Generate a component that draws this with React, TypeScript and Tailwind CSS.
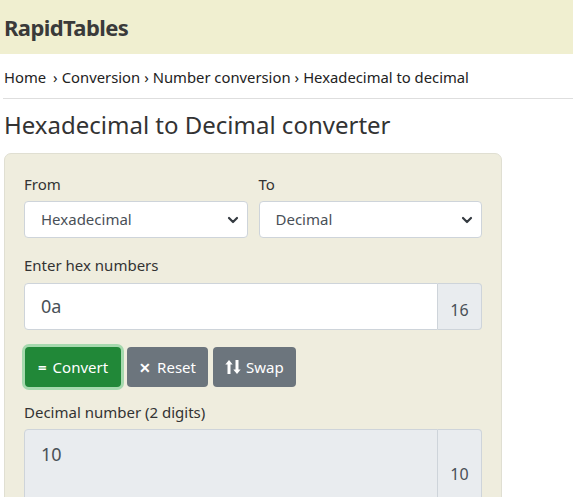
export default function App() {
  return (
    <div className="min-h-screen bg-white text-[#333] overflow-hidden" style={{ fontFamily: '"Noto Sans", "Open Sans", sans-serif' }}>
      {/* Header */}
      <header className="h-[54px] bg-[#f0efd0] flex items-center px-[4px]">
        <span className="text-[22px] font-bold text-[#3a3a3a] tracking-[-0.6px]">RapidTables</span>
      </header>

      {/* Breadcrumb */}
      <nav className="px-[4px] pt-[12px] pb-[10px] text-[14.8px] text-[#222] leading-[22px]">
        <span>Home</span>
        <span className="mx-[4px] ml-[7px]">›</span>
        <span>Conversion</span>
        <span className="mx-[4px]">›</span>
        <span>Number conversion</span>
        <span className="mx-[4px]">›</span>
        <span>Hexadecimal to decimal</span>
      </nav>
      <hr className="ml-[3px] border-0 h-px bg-[#dedede]" />

      <h1 className="px-[4px] mt-[10px] text-[24px] leading-[32px] text-[#333]">Hexadecimal to Decimal converter</h1>

      {/* Panel */}
      <div className="ml-[4px] mt-[12px] w-[498px] bg-[#efedde] border border-[#e0dfd2] rounded-[7px] px-[19px] pt-[20px] pb-[40px]">
        <div className="flex gap-[11px]">
          <div className="flex-1">
            <label className="block text-[15px] leading-[20px] mb-[7px]">From</label>
            <div className="h-[37px] bg-white border border-[#ced4da] rounded-[4px] flex items-center pl-[16px] pr-[8px] text-[15px] text-[#495057]">
              <span className="flex-1">Hexadecimal</span>
              <Chevron />
            </div>
          </div>
          <div className="flex-1">
            <label className="block text-[15px] leading-[20px] mb-[7px]">To</label>
            <div className="h-[37px] bg-white border border-[#ced4da] rounded-[4px] flex items-center pl-[16px] pr-[8px] text-[15px] text-[#495057]">
              <span className="flex-1">Decimal</span>
              <Chevron />
            </div>
          </div>
        </div>

        <label className="block text-[15px] leading-[20px] mt-[17px] mb-[8px]">Enter hex numbers</label>
        <div className="flex h-[47px]">
          <div className="flex-1 bg-white border border-[#ced4da] rounded-l-[4px] flex items-center pl-[16px] text-[18px] text-[#495057]">0a</div>
          <div className="w-[44px] bg-[#e9ecef] border border-l-0 border-[#ced4da] rounded-r-[4px] flex items-end justify-center pb-[7px] text-[16px] text-[#495057]">16</div>
        </div>

        <div className="flex gap-[4px] mt-[17px]">
          <button className="h-[40px] px-[13px] bg-[#218838] text-white text-[15px] rounded-[4px] ring-[3px] ring-[#a6d9ae] ml-[1px] flex items-center">
            <span className="mr-[6px] font-bold">=</span>Convert
          </button>
          <button className="h-[40px] px-[12px] ml-[2px] bg-[#6c757d] text-white text-[15px] rounded-[4px] flex items-center">
            <span className="mr-[6px] text-[14px] font-bold">✕</span>Reset
          </button>
          <button className="h-[40px] px-[12px] ml-[1px] bg-[#6c757d] text-white text-[15px] rounded-[4px] flex items-center">
            <SwapIcon />
            <span className="ml-[5px]">Swap</span>
          </button>
        </div>

        <label className="block text-[15px] leading-[20px] mt-[15px] mb-[7px]">Decimal number (2 digits)</label>
        <div className="flex h-[90px]">
          <div className="flex-1 bg-[#e9ecef] border border-[#ced4da] rounded-l-[4px] pl-[16px] pt-[11px] text-[18px] text-[#495057]">10</div>
          <div className="w-[44px] bg-[#e9ecef] border border-l-0 border-[#ced4da] rounded-r-[4px] flex items-center justify-center text-[16px] text-[#495057]">10</div>
        </div>
      </div>
    </div>
  );
}

function Chevron() {
  return (
    <svg width="12" height="10" viewBox="0 0 12 10" className="shrink-0">
      <path d="M2 3 L6 7 L10 3" fill="none" stroke="#343a40" strokeWidth="2.2" strokeLinecap="round" strokeLinejoin="round" />
    </svg>
  );
}

function SwapIcon() {
  return (
    <svg width="16" height="16" viewBox="0 0 16 16">
      <path d="M4 15 V4" stroke="white" strokeWidth="3" />
      <path d="M0.3 5.5 L4 1 L7.7 5.5 Z" fill="white" />
      <path d="M12 1 V12" stroke="white" strokeWidth="3" />
      <path d="M8.3 10.5 L12 15 L15.7 10.5 Z" fill="white" />
    </svg>
  );
}
